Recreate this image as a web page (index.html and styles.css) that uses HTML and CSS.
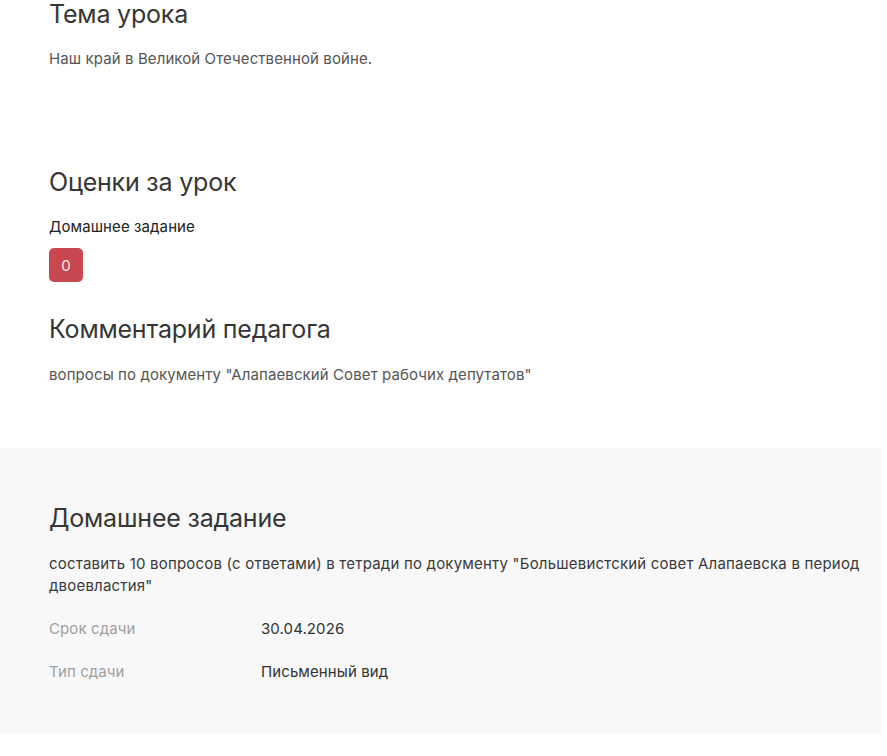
FILE: index.html
```html
<!DOCTYPE html>
<html lang="ru">
  <head>
    <meta charset="UTF-8" />
    <meta name="viewport" content="width=device-width, initial-scale=1.0" />
    <title>Урок</title>
    <link rel="stylesheet" href="styles.css">
  </head>
  <body>
    <div class="lesson">
      <div class="section section-topic">
        <h2>Тема урока</h2>
        <p class="text">Наш край в Великой Отечественной войне.</p>
      </div>

      <div class="section section-marks">
        <h2>Оценки за урок</h2>
        <div class="mark-label">Домашнее задание</div>
        <div class="mark mark-bad">0</div>
      </div>

      <div class="section section-comment">
        <h2>Комментарий педагога</h2>
        <p class="text">вопросы по документу "Алапаевский Совет рабочих депутатов"</p>
      </div>
    </div>

    <div class="homework">
      <h2>Домашнее задание</h2>
      <p class="homework-text">составить 10 вопросов (с ответами) в тетради по документу "Большевистский совет Алапаевска в период двоевластия"</p>
      <div class="info-row">
        <div class="info-label">Срок сдачи</div>
        <div class="info-value">30.04.2026</div>
      </div>
      <div class="info-row">
        <div class="info-label">Тип сдачи</div>
        <div class="info-value">Письменный вид</div>
      </div>
    </div>
  </body>
</html>
```

FILE: styles.css
```css
body {
  margin: 0;
  font-family: "Inter", "Noto Sans", sans-serif;
  background: #fff;
  color: #333;
}

h2 {
  margin: 0;
  font-size: 25px;
  line-height: 32px;
  font-weight: 400;
  color: #363636;
  letter-spacing: -0.2px;
}

.lesson {
  padding: 0 49px;
}

.section-topic {
  margin-top: -2px;
}

.section-marks {
  margin-top: 96px;
}

.section-comment {
  margin-top: 31px;
}

.text {
  margin: 18px 0 0 0;
  font-size: 15px;
  line-height: 22px;
  color: #555;
  letter-spacing: 0.1px;
}

.section-comment .text {
  margin-top: 19px;
}

.mark-label {
  margin-top: 18px;
  font-size: 15px;
  line-height: 22px;
  color: #222;
  letter-spacing: 0.1px;
}

.mark {
  margin-top: 10px;
  width: 34px;
  height: 34px;
  border-radius: 5px;
  display: flex;
  align-items: center;
  justify-content: center;
  font-size: 15px;
  color: #fbe9ea;
}

.mark-bad {
  background: #c9474f;
}

.homework {
  margin: 62px 5px 0 0;
  padding: 54px 15px 51px 49px;
  background: #f8f8f8;
}

.homework-text {
  margin: 19px 0 0 0;
  font-size: 15px;
  line-height: 22px;
  color: #3a3a3a;
  letter-spacing: 0.2px;
}

.info-row {
  display: flex;
  margin-top: 21px;
  font-size: 15px;
  line-height: 22px;
  letter-spacing: 0.1px;
}

.info-label {
  width: 212px;
  color: #a0a0a0;
}

.info-value {
  color: #333;
}
```
